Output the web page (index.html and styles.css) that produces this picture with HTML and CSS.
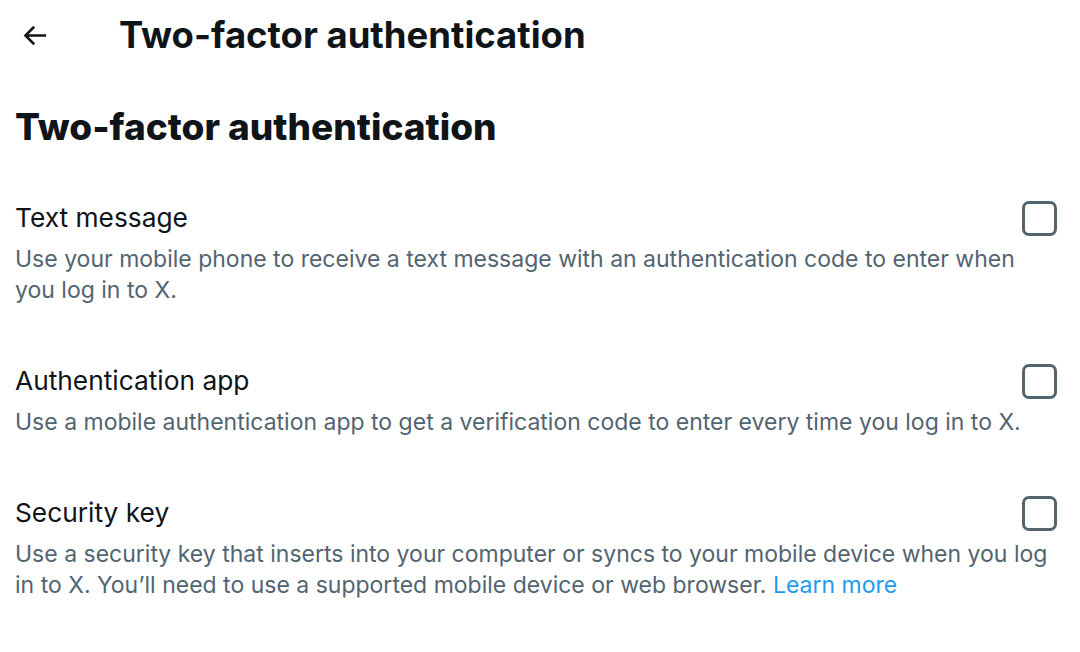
FILE: index.html
```html
<!DOCTYPE html>
<html lang="en">
<head>
<meta charset="utf-8">
<title>Two-factor authentication</title>
<link rel="stylesheet" href="styles.css">
</head>
<body>
<header class="topbar">
  <button class="back" aria-label="Back">
    <svg viewBox="0 0 24 24" width="31" height="31"><path d="M7.414 13l5.043 5.04-1.414 1.42L3.586 12l7.457-7.46 1.414 1.42L7.414 11H21v2H7.414z" fill="#0f1419"/></svg>
  </button>
  <h1 class="topbar-title">Two-factor authentication</h1>
</header>
<main class="content">
  <h2 class="heading">Two-factor authentication</h2>
  <section class="option">
    <div class="option-head">
      <div class="option-title">Text message</div>
      <span class="checkbox"></span>
    </div>
    <p class="option-desc">Use your mobile phone to receive a text message with an authentication code to enter when you log in to X.</p>
  </section>
  <section class="option">
    <div class="option-head">
      <div class="option-title">Authentication app</div>
      <span class="checkbox"></span>
    </div>
    <p class="option-desc">Use a mobile authentication app to get a verification code to enter every time you log in to X.</p>
  </section>
  <section class="option">
    <div class="option-head">
      <div class="option-title">Security key</div>
      <span class="checkbox"></span>
    </div>
    <p class="option-desc">Use a security key that inserts into your computer or syncs to your mobile device when you log in to X. You’ll need to use a supported mobile device or web browser. <a href="#" class="link">Learn more</a></p>
  </section>
</main>
</body>
</html>
```
FILE: styles.css
```css
html, body {
  margin: 0;
  padding: 0;
  background: #ffffff;
}
body {
  font-family: Inter, "Noto Sans", sans-serif;
  color: #0f1419;
  width: 1080px;
  height: 652px;
  overflow: hidden;
}
.topbar {
  display: flex;
  align-items: center;
  height: 70px;
  padding-left: 19px;
}
.back {
  border: 0;
  background: none;
  padding: 0;
  width: 31px;
  height: 31px;
  display: flex;
}
.topbar-title {
  margin: 0 0 0 69px;
  font-size: 36.5px;
  font-weight: 700;
  letter-spacing: 0;
}
.content {
  padding: 0 23px 0 15px;
}
.heading {
  margin: 35px 0 53px;
  font-size: 37px;
  font-weight: 800;
  line-height: 44px;
}
.option {
  margin-bottom: 59px;
}
.option-head {
  display: flex;
  align-items: center;
  justify-content: space-between;
  height: 32px;
}
.option-title {
  font-size: 26.3px;
  line-height: 32px;
  font-weight: 400;
}
.option-desc {
  margin: 10px 0 0;
  font-size: 23px;
  line-height: 31px;
  color: #536471;
}
.link {
  color: #1d9bf0;
  text-decoration: none;
}
.checkbox {
  flex: none;
  box-sizing: border-box;
  width: 35px;
  height: 35px;
  border: 3px solid #536471;
  border-radius: 7px;
}
```
